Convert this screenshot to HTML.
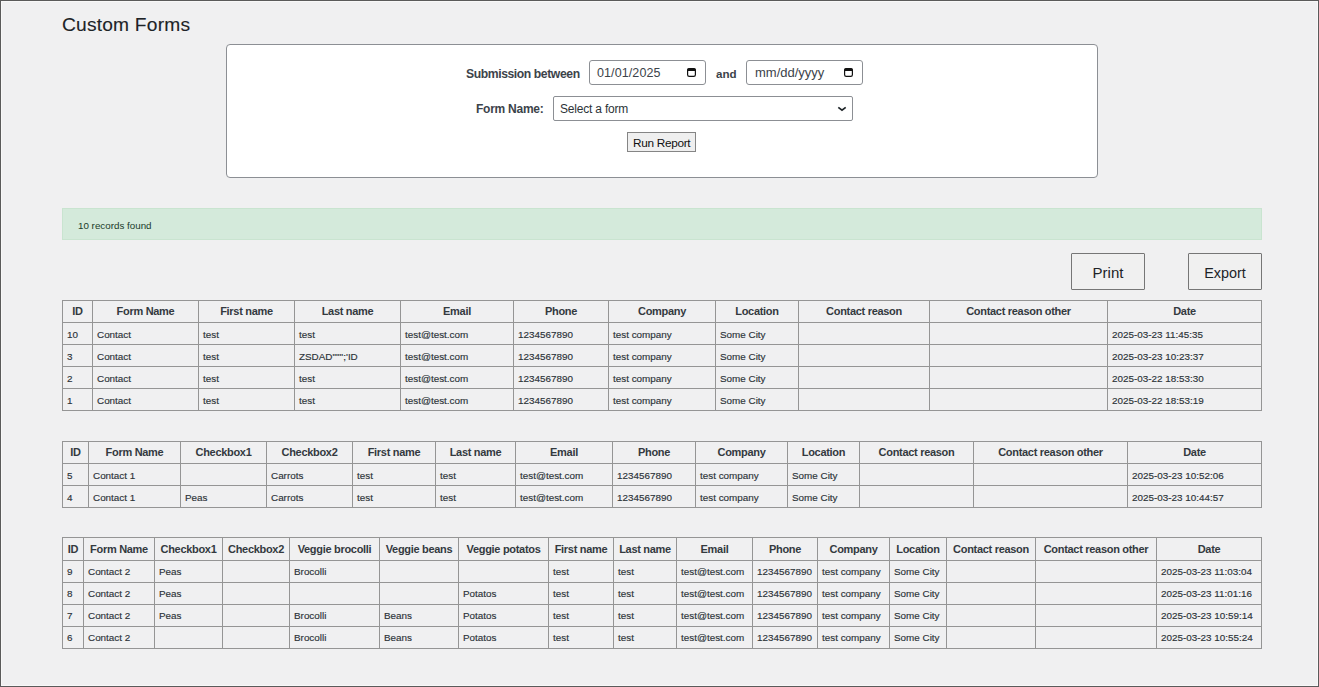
<!DOCTYPE html>
<html><head><meta charset="utf-8"><title>Custom Forms</title>
<style>
html,body{margin:0;padding:0;}
body{width:1319px;height:687px;overflow:hidden;background:#f0f0f1;position:relative;font-family:"Liberation Sans", sans-serif;}
.t{position:absolute;white-space:nowrap;line-height:1;}
.r{position:absolute;}
</style></head><body>
<div class="r" style="left:0px;top:0px;width:1319px;height:1px;background:#5a5a5a"></div>
<div class="r" style="left:0px;top:686px;width:1319px;height:1px;background:#5a5a5a"></div>
<div class="r" style="left:0px;top:0px;width:1px;height:687px;background:#5a5a5a"></div>
<div class="r" style="left:1318px;top:0px;width:1px;height:687px;background:#5a5a5a"></div>
<div class="r" style="left:1px;top:1px;width:1317px;height:1px;background:#f8f8f8"></div>
<div class="r" style="left:1px;top:685px;width:1317px;height:1px;background:#f8f8f8"></div>
<div class="r" style="left:1px;top:1px;width:1px;height:685px;background:#f8f8f8"></div>
<div class="r" style="left:1317px;top:1px;width:1px;height:685px;background:#f8f8f8"></div>
<div class="t" style="left:62px;top:14.85px;font-size:19.2px;color:#1d2327;letter-spacing:0.2px;-webkit-text-stroke:0.12px #1d2327;">Custom Forms</div>
<div class="r" style="left:226px;top:44px;width:872px;height:134px;background:#fff;border:1px solid #8c8f94;border-radius:4px;box-sizing:border-box"></div>
<div class="t" style="left:466px;top:67.67px;font-size:12.2px;font-weight:700;color:#3c434a;letter-spacing:-0.42px;">Submission between</div>
<div class="r" style="left:589px;top:60px;width:117px;height:25px;background:#fff;border:1px solid #8c8f94;border-radius:3px;box-sizing:border-box"></div>
<div class="t" style="left:597px;top:67.42px;font-size:12.5px;color:#3c434a;letter-spacing:0.1px;">01/01/2025</div>
<div class="t" style="left:716px;top:68.18px;font-size:11.6px;font-weight:700;color:#3c434a;">and</div>
<div class="r" style="left:746px;top:60px;width:117px;height:25px;background:#fff;border:1px solid #8c8f94;border-radius:3px;box-sizing:border-box"></div>
<div class="t" style="left:755px;top:66.00px;font-size:13px;color:#3c434a;">mm/dd/yyyy</div>
<div class="t" style="left:476px;top:102.84px;font-size:12px;font-weight:700;color:#3c434a;letter-spacing:-0.25px;">Form Name:</div>
<div class="r" style="left:553px;top:96px;width:300px;height:25px;background:#fff;border:1px solid #8c8f94;border-radius:2px;box-sizing:border-box"></div>
<div class="t" style="left:560px;top:102.84px;font-size:12px;color:#2c3338;letter-spacing:-0.2px;">Select a form</div>
<div class="r" style="left:627px;top:132px;width:69px;height:20px;background:#efefef;border:1px solid #858585;box-sizing:border-box"></div>
<div class="t" style="left:633px;top:137.71px;font-size:11.8px;color:#111;letter-spacing:-0.3px;">Run Report</div>
<svg class="r" style="left:687px;top:68px" width="9" height="9" viewBox="0 0 9 9"><rect x="0.6" y="0.6" width="7.8" height="7.8" rx="1.6" fill="none" stroke="#111" stroke-width="1.2"/><path d="M0.2 2.9 L0.2 1.8 Q0.2 0.2 1.8 0.2 L7.2 0.2 Q8.8 0.2 8.8 1.8 L8.8 2.9 Z" fill="#111"/></svg>
<svg class="r" style="left:844px;top:68px" width="9" height="9" viewBox="0 0 9 9"><rect x="0.6" y="0.6" width="7.8" height="7.8" rx="1.6" fill="none" stroke="#111" stroke-width="1.2"/><path d="M0.2 2.9 L0.2 1.8 Q0.2 0.2 1.8 0.2 L7.2 0.2 Q8.8 0.2 8.8 1.8 L8.8 2.9 Z" fill="#111"/></svg>
<svg class="r" style="left:837px;top:105px" width="10" height="7" viewBox="0 0 10 7"><path d="M1.3 2.4 L5 5.2 L8.7 2.4" fill="none" stroke="#1d2327" stroke-width="1.7"/></svg>
<div class="r" style="left:62px;top:208px;width:1200px;height:32px;background:#d4eadb;border:1px solid #c9e4d0;box-sizing:border-box"></div>
<div class="t" style="left:78px;top:220.70px;font-size:9.8px;color:#203c2a;">10 records found</div>
<div class="r" style="left:1071px;top:253px;width:74px;height:37px;background:#f0f0f0;border:1px solid #767676;box-sizing:border-box;border-radius:1px"></div>
<div class="t" style="left:1071px;top:265.30px;font-size:15px;color:#1d2327;width:74px;text-align:center;">Print</div>
<div class="r" style="left:1188px;top:253px;width:74px;height:37px;background:#f0f0f0;border:1px solid #767676;box-sizing:border-box;border-radius:1px"></div>
<div class="t" style="left:1188px;top:265.81px;font-size:14.4px;color:#1d2327;width:74px;text-align:center;">Export</div>
<div class="r" style="left:62px;top:300px;width:1200px;height:1px;background:#959595"></div>
<div class="r" style="left:62px;top:322px;width:1200px;height:1px;background:#959595"></div>
<div class="r" style="left:62px;top:344px;width:1200px;height:1px;background:#959595"></div>
<div class="r" style="left:62px;top:366px;width:1200px;height:1px;background:#959595"></div>
<div class="r" style="left:62px;top:388px;width:1200px;height:1px;background:#959595"></div>
<div class="r" style="left:62px;top:410px;width:1200px;height:1px;background:#959595"></div>
<div class="r" style="left:62px;top:300px;width:1px;height:111px;background:#959595"></div>
<div class="r" style="left:92px;top:300px;width:1px;height:111px;background:#959595"></div>
<div class="r" style="left:198px;top:300px;width:1px;height:111px;background:#959595"></div>
<div class="r" style="left:294px;top:300px;width:1px;height:111px;background:#959595"></div>
<div class="r" style="left:400px;top:300px;width:1px;height:111px;background:#959595"></div>
<div class="r" style="left:513px;top:300px;width:1px;height:111px;background:#959595"></div>
<div class="r" style="left:608px;top:300px;width:1px;height:111px;background:#959595"></div>
<div class="r" style="left:715px;top:300px;width:1px;height:111px;background:#959595"></div>
<div class="r" style="left:798px;top:300px;width:1px;height:111px;background:#959595"></div>
<div class="r" style="left:929px;top:300px;width:1px;height:111px;background:#959595"></div>
<div class="r" style="left:1107px;top:300px;width:1px;height:111px;background:#959595"></div>
<div class="r" style="left:1261px;top:300px;width:1px;height:111px;background:#959595"></div>
<div class="t" style="left:63px;top:305.69px;font-size:11px;font-weight:700;color:#343a3f;letter-spacing:-0.3px;width:29px;text-align:center;">ID</div>
<div class="t" style="left:93px;top:305.69px;font-size:11px;font-weight:700;color:#343a3f;letter-spacing:-0.3px;width:105px;text-align:center;">Form Name</div>
<div class="t" style="left:199px;top:305.69px;font-size:11px;font-weight:700;color:#343a3f;letter-spacing:-0.3px;width:95px;text-align:center;">First name</div>
<div class="t" style="left:295px;top:305.69px;font-size:11px;font-weight:700;color:#343a3f;letter-spacing:-0.3px;width:105px;text-align:center;">Last name</div>
<div class="t" style="left:401px;top:305.69px;font-size:11px;font-weight:700;color:#343a3f;letter-spacing:-0.3px;width:112px;text-align:center;">Email</div>
<div class="t" style="left:514px;top:305.69px;font-size:11px;font-weight:700;color:#343a3f;letter-spacing:-0.3px;width:94px;text-align:center;">Phone</div>
<div class="t" style="left:609px;top:305.69px;font-size:11px;font-weight:700;color:#343a3f;letter-spacing:-0.3px;width:106px;text-align:center;">Company</div>
<div class="t" style="left:716px;top:305.69px;font-size:11px;font-weight:700;color:#343a3f;letter-spacing:-0.3px;width:82px;text-align:center;">Location</div>
<div class="t" style="left:799px;top:305.69px;font-size:11px;font-weight:700;color:#343a3f;letter-spacing:-0.3px;width:130px;text-align:center;">Contact reason</div>
<div class="t" style="left:930px;top:305.69px;font-size:11px;font-weight:700;color:#343a3f;letter-spacing:-0.3px;width:177px;text-align:center;">Contact reason other</div>
<div class="t" style="left:1108px;top:305.69px;font-size:11px;font-weight:700;color:#343a3f;letter-spacing:-0.3px;width:153px;text-align:center;">Date</div>
<div class="t" style="left:67px;top:329.62px;font-size:9.9px;color:#2c3338;-webkit-text-stroke:0.15px #2c3338;">10</div>
<div class="t" style="left:97px;top:329.62px;font-size:9.9px;color:#2c3338;-webkit-text-stroke:0.15px #2c3338;">Contact</div>
<div class="t" style="left:203px;top:329.62px;font-size:9.9px;color:#2c3338;-webkit-text-stroke:0.15px #2c3338;">test</div>
<div class="t" style="left:299px;top:329.62px;font-size:9.9px;color:#2c3338;-webkit-text-stroke:0.15px #2c3338;">test</div>
<div class="t" style="left:405px;top:329.62px;font-size:9.9px;color:#2c3338;-webkit-text-stroke:0.15px #2c3338;">test@test.com</div>
<div class="t" style="left:518px;top:329.62px;font-size:9.9px;color:#2c3338;-webkit-text-stroke:0.15px #2c3338;">1234567890</div>
<div class="t" style="left:613px;top:329.62px;font-size:9.9px;color:#2c3338;-webkit-text-stroke:0.15px #2c3338;">test company</div>
<div class="t" style="left:720px;top:329.62px;font-size:9.9px;color:#2c3338;-webkit-text-stroke:0.15px #2c3338;">Some City</div>
<div class="t" style="left:1112px;top:329.62px;font-size:9.9px;color:#2c3338;-webkit-text-stroke:0.15px #2c3338;">2025-03-23 11:45:35</div>
<div class="t" style="left:67px;top:351.62px;font-size:9.9px;color:#2c3338;-webkit-text-stroke:0.15px #2c3338;">3</div>
<div class="t" style="left:97px;top:351.62px;font-size:9.9px;color:#2c3338;-webkit-text-stroke:0.15px #2c3338;">Contact</div>
<div class="t" style="left:203px;top:351.62px;font-size:9.9px;color:#2c3338;-webkit-text-stroke:0.15px #2c3338;">test</div>
<div class="t" style="left:299px;top:351.62px;font-size:9.9px;color:#2c3338;-webkit-text-stroke:0.15px #2c3338;">ZSDAD""'';'ID</div>
<div class="t" style="left:405px;top:351.62px;font-size:9.9px;color:#2c3338;-webkit-text-stroke:0.15px #2c3338;">test@test.com</div>
<div class="t" style="left:518px;top:351.62px;font-size:9.9px;color:#2c3338;-webkit-text-stroke:0.15px #2c3338;">1234567890</div>
<div class="t" style="left:613px;top:351.62px;font-size:9.9px;color:#2c3338;-webkit-text-stroke:0.15px #2c3338;">test company</div>
<div class="t" style="left:720px;top:351.62px;font-size:9.9px;color:#2c3338;-webkit-text-stroke:0.15px #2c3338;">Some City</div>
<div class="t" style="left:1112px;top:351.62px;font-size:9.9px;color:#2c3338;-webkit-text-stroke:0.15px #2c3338;">2025-03-23 10:23:37</div>
<div class="t" style="left:67px;top:373.62px;font-size:9.9px;color:#2c3338;-webkit-text-stroke:0.15px #2c3338;">2</div>
<div class="t" style="left:97px;top:373.62px;font-size:9.9px;color:#2c3338;-webkit-text-stroke:0.15px #2c3338;">Contact</div>
<div class="t" style="left:203px;top:373.62px;font-size:9.9px;color:#2c3338;-webkit-text-stroke:0.15px #2c3338;">test</div>
<div class="t" style="left:299px;top:373.62px;font-size:9.9px;color:#2c3338;-webkit-text-stroke:0.15px #2c3338;">test</div>
<div class="t" style="left:405px;top:373.62px;font-size:9.9px;color:#2c3338;-webkit-text-stroke:0.15px #2c3338;">test@test.com</div>
<div class="t" style="left:518px;top:373.62px;font-size:9.9px;color:#2c3338;-webkit-text-stroke:0.15px #2c3338;">1234567890</div>
<div class="t" style="left:613px;top:373.62px;font-size:9.9px;color:#2c3338;-webkit-text-stroke:0.15px #2c3338;">test company</div>
<div class="t" style="left:720px;top:373.62px;font-size:9.9px;color:#2c3338;-webkit-text-stroke:0.15px #2c3338;">Some City</div>
<div class="t" style="left:1112px;top:373.62px;font-size:9.9px;color:#2c3338;-webkit-text-stroke:0.15px #2c3338;">2025-03-22 18:53:30</div>
<div class="t" style="left:67px;top:395.62px;font-size:9.9px;color:#2c3338;-webkit-text-stroke:0.15px #2c3338;">1</div>
<div class="t" style="left:97px;top:395.62px;font-size:9.9px;color:#2c3338;-webkit-text-stroke:0.15px #2c3338;">Contact</div>
<div class="t" style="left:203px;top:395.62px;font-size:9.9px;color:#2c3338;-webkit-text-stroke:0.15px #2c3338;">test</div>
<div class="t" style="left:299px;top:395.62px;font-size:9.9px;color:#2c3338;-webkit-text-stroke:0.15px #2c3338;">test</div>
<div class="t" style="left:405px;top:395.62px;font-size:9.9px;color:#2c3338;-webkit-text-stroke:0.15px #2c3338;">test@test.com</div>
<div class="t" style="left:518px;top:395.62px;font-size:9.9px;color:#2c3338;-webkit-text-stroke:0.15px #2c3338;">1234567890</div>
<div class="t" style="left:613px;top:395.62px;font-size:9.9px;color:#2c3338;-webkit-text-stroke:0.15px #2c3338;">test company</div>
<div class="t" style="left:720px;top:395.62px;font-size:9.9px;color:#2c3338;-webkit-text-stroke:0.15px #2c3338;">Some City</div>
<div class="t" style="left:1112px;top:395.62px;font-size:9.9px;color:#2c3338;-webkit-text-stroke:0.15px #2c3338;">2025-03-22 18:53:19</div>
<div class="r" style="left:62px;top:441px;width:1200px;height:1px;background:#959595"></div>
<div class="r" style="left:62px;top:463px;width:1200px;height:1px;background:#959595"></div>
<div class="r" style="left:62px;top:485px;width:1200px;height:1px;background:#959595"></div>
<div class="r" style="left:62px;top:507px;width:1200px;height:1px;background:#959595"></div>
<div class="r" style="left:62px;top:441px;width:1px;height:67px;background:#959595"></div>
<div class="r" style="left:88px;top:441px;width:1px;height:67px;background:#959595"></div>
<div class="r" style="left:180px;top:441px;width:1px;height:67px;background:#959595"></div>
<div class="r" style="left:266px;top:441px;width:1px;height:67px;background:#959595"></div>
<div class="r" style="left:352px;top:441px;width:1px;height:67px;background:#959595"></div>
<div class="r" style="left:435px;top:441px;width:1px;height:67px;background:#959595"></div>
<div class="r" style="left:515px;top:441px;width:1px;height:67px;background:#959595"></div>
<div class="r" style="left:612px;top:441px;width:1px;height:67px;background:#959595"></div>
<div class="r" style="left:695px;top:441px;width:1px;height:67px;background:#959595"></div>
<div class="r" style="left:787px;top:441px;width:1px;height:67px;background:#959595"></div>
<div class="r" style="left:859px;top:441px;width:1px;height:67px;background:#959595"></div>
<div class="r" style="left:973px;top:441px;width:1px;height:67px;background:#959595"></div>
<div class="r" style="left:1127px;top:441px;width:1px;height:67px;background:#959595"></div>
<div class="r" style="left:1261px;top:441px;width:1px;height:67px;background:#959595"></div>
<div class="t" style="left:63px;top:446.69px;font-size:11px;font-weight:700;color:#343a3f;letter-spacing:-0.3px;width:25px;text-align:center;">ID</div>
<div class="t" style="left:89px;top:446.69px;font-size:11px;font-weight:700;color:#343a3f;letter-spacing:-0.3px;width:91px;text-align:center;">Form Name</div>
<div class="t" style="left:181px;top:446.69px;font-size:11px;font-weight:700;color:#343a3f;letter-spacing:-0.3px;width:85px;text-align:center;">Checkbox1</div>
<div class="t" style="left:267px;top:446.69px;font-size:11px;font-weight:700;color:#343a3f;letter-spacing:-0.3px;width:85px;text-align:center;">Checkbox2</div>
<div class="t" style="left:353px;top:446.69px;font-size:11px;font-weight:700;color:#343a3f;letter-spacing:-0.3px;width:82px;text-align:center;">First name</div>
<div class="t" style="left:436px;top:446.69px;font-size:11px;font-weight:700;color:#343a3f;letter-spacing:-0.3px;width:79px;text-align:center;">Last name</div>
<div class="t" style="left:516px;top:446.69px;font-size:11px;font-weight:700;color:#343a3f;letter-spacing:-0.3px;width:96px;text-align:center;">Email</div>
<div class="t" style="left:613px;top:446.69px;font-size:11px;font-weight:700;color:#343a3f;letter-spacing:-0.3px;width:82px;text-align:center;">Phone</div>
<div class="t" style="left:696px;top:446.69px;font-size:11px;font-weight:700;color:#343a3f;letter-spacing:-0.3px;width:91px;text-align:center;">Company</div>
<div class="t" style="left:788px;top:446.69px;font-size:11px;font-weight:700;color:#343a3f;letter-spacing:-0.3px;width:71px;text-align:center;">Location</div>
<div class="t" style="left:860px;top:446.69px;font-size:11px;font-weight:700;color:#343a3f;letter-spacing:-0.3px;width:113px;text-align:center;">Contact reason</div>
<div class="t" style="left:974px;top:446.69px;font-size:11px;font-weight:700;color:#343a3f;letter-spacing:-0.3px;width:153px;text-align:center;">Contact reason other</div>
<div class="t" style="left:1128px;top:446.69px;font-size:11px;font-weight:700;color:#343a3f;letter-spacing:-0.3px;width:133px;text-align:center;">Date</div>
<div class="t" style="left:67px;top:470.62px;font-size:9.9px;color:#2c3338;-webkit-text-stroke:0.15px #2c3338;">5</div>
<div class="t" style="left:93px;top:470.62px;font-size:9.9px;color:#2c3338;-webkit-text-stroke:0.15px #2c3338;">Contact 1</div>
<div class="t" style="left:271px;top:470.62px;font-size:9.9px;color:#2c3338;-webkit-text-stroke:0.15px #2c3338;">Carrots</div>
<div class="t" style="left:357px;top:470.62px;font-size:9.9px;color:#2c3338;-webkit-text-stroke:0.15px #2c3338;">test</div>
<div class="t" style="left:440px;top:470.62px;font-size:9.9px;color:#2c3338;-webkit-text-stroke:0.15px #2c3338;">test</div>
<div class="t" style="left:520px;top:470.62px;font-size:9.9px;color:#2c3338;-webkit-text-stroke:0.15px #2c3338;">test@test.com</div>
<div class="t" style="left:617px;top:470.62px;font-size:9.9px;color:#2c3338;-webkit-text-stroke:0.15px #2c3338;">1234567890</div>
<div class="t" style="left:700px;top:470.62px;font-size:9.9px;color:#2c3338;-webkit-text-stroke:0.15px #2c3338;">test company</div>
<div class="t" style="left:792px;top:470.62px;font-size:9.9px;color:#2c3338;-webkit-text-stroke:0.15px #2c3338;">Some City</div>
<div class="t" style="left:1132px;top:470.62px;font-size:9.9px;color:#2c3338;-webkit-text-stroke:0.15px #2c3338;">2025-03-23 10:52:06</div>
<div class="t" style="left:67px;top:492.62px;font-size:9.9px;color:#2c3338;-webkit-text-stroke:0.15px #2c3338;">4</div>
<div class="t" style="left:93px;top:492.62px;font-size:9.9px;color:#2c3338;-webkit-text-stroke:0.15px #2c3338;">Contact 1</div>
<div class="t" style="left:185px;top:492.62px;font-size:9.9px;color:#2c3338;-webkit-text-stroke:0.15px #2c3338;">Peas</div>
<div class="t" style="left:271px;top:492.62px;font-size:9.9px;color:#2c3338;-webkit-text-stroke:0.15px #2c3338;">Carrots</div>
<div class="t" style="left:357px;top:492.62px;font-size:9.9px;color:#2c3338;-webkit-text-stroke:0.15px #2c3338;">test</div>
<div class="t" style="left:440px;top:492.62px;font-size:9.9px;color:#2c3338;-webkit-text-stroke:0.15px #2c3338;">test</div>
<div class="t" style="left:520px;top:492.62px;font-size:9.9px;color:#2c3338;-webkit-text-stroke:0.15px #2c3338;">test@test.com</div>
<div class="t" style="left:617px;top:492.62px;font-size:9.9px;color:#2c3338;-webkit-text-stroke:0.15px #2c3338;">1234567890</div>
<div class="t" style="left:700px;top:492.62px;font-size:9.9px;color:#2c3338;-webkit-text-stroke:0.15px #2c3338;">test company</div>
<div class="t" style="left:792px;top:492.62px;font-size:9.9px;color:#2c3338;-webkit-text-stroke:0.15px #2c3338;">Some City</div>
<div class="t" style="left:1132px;top:492.62px;font-size:9.9px;color:#2c3338;-webkit-text-stroke:0.15px #2c3338;">2025-03-23 10:44:57</div>
<div class="r" style="left:62px;top:537px;width:1200px;height:1px;background:#959595"></div>
<div class="r" style="left:62px;top:560px;width:1200px;height:1px;background:#959595"></div>
<div class="r" style="left:62px;top:582px;width:1200px;height:1px;background:#959595"></div>
<div class="r" style="left:62px;top:604px;width:1200px;height:1px;background:#959595"></div>
<div class="r" style="left:62px;top:626px;width:1200px;height:1px;background:#959595"></div>
<div class="r" style="left:62px;top:648px;width:1200px;height:1px;background:#959595"></div>
<div class="r" style="left:62px;top:537px;width:1px;height:112px;background:#959595"></div>
<div class="r" style="left:83px;top:537px;width:1px;height:112px;background:#959595"></div>
<div class="r" style="left:154px;top:537px;width:1px;height:112px;background:#959595"></div>
<div class="r" style="left:222px;top:537px;width:1px;height:112px;background:#959595"></div>
<div class="r" style="left:289px;top:537px;width:1px;height:112px;background:#959595"></div>
<div class="r" style="left:379px;top:537px;width:1px;height:112px;background:#959595"></div>
<div class="r" style="left:458px;top:537px;width:1px;height:112px;background:#959595"></div>
<div class="r" style="left:548px;top:537px;width:1px;height:112px;background:#959595"></div>
<div class="r" style="left:613px;top:537px;width:1px;height:112px;background:#959595"></div>
<div class="r" style="left:676px;top:537px;width:1px;height:112px;background:#959595"></div>
<div class="r" style="left:752px;top:537px;width:1px;height:112px;background:#959595"></div>
<div class="r" style="left:817px;top:537px;width:1px;height:112px;background:#959595"></div>
<div class="r" style="left:889px;top:537px;width:1px;height:112px;background:#959595"></div>
<div class="r" style="left:946px;top:537px;width:1px;height:112px;background:#959595"></div>
<div class="r" style="left:1035px;top:537px;width:1px;height:112px;background:#959595"></div>
<div class="r" style="left:1156px;top:537px;width:1px;height:112px;background:#959595"></div>
<div class="r" style="left:1261px;top:537px;width:1px;height:112px;background:#959595"></div>
<div class="t" style="left:63px;top:543.69px;font-size:11px;font-weight:700;color:#343a3f;letter-spacing:-0.3px;width:20px;text-align:center;">ID</div>
<div class="t" style="left:84px;top:543.69px;font-size:11px;font-weight:700;color:#343a3f;letter-spacing:-0.3px;width:70px;text-align:center;">Form Name</div>
<div class="t" style="left:155px;top:543.69px;font-size:11px;font-weight:700;color:#343a3f;letter-spacing:-0.3px;width:67px;text-align:center;">Checkbox1</div>
<div class="t" style="left:223px;top:543.69px;font-size:11px;font-weight:700;color:#343a3f;letter-spacing:-0.3px;width:66px;text-align:center;">Checkbox2</div>
<div class="t" style="left:290px;top:543.69px;font-size:11px;font-weight:700;color:#343a3f;letter-spacing:-0.3px;width:89px;text-align:center;">Veggie brocolli</div>
<div class="t" style="left:380px;top:543.69px;font-size:11px;font-weight:700;color:#343a3f;letter-spacing:-0.3px;width:78px;text-align:center;">Veggie beans</div>
<div class="t" style="left:459px;top:543.69px;font-size:11px;font-weight:700;color:#343a3f;letter-spacing:-0.3px;width:89px;text-align:center;">Veggie potatos</div>
<div class="t" style="left:549px;top:543.69px;font-size:11px;font-weight:700;color:#343a3f;letter-spacing:-0.3px;width:64px;text-align:center;">First name</div>
<div class="t" style="left:614px;top:543.69px;font-size:11px;font-weight:700;color:#343a3f;letter-spacing:-0.3px;width:62px;text-align:center;">Last name</div>
<div class="t" style="left:677px;top:543.69px;font-size:11px;font-weight:700;color:#343a3f;letter-spacing:-0.3px;width:75px;text-align:center;">Email</div>
<div class="t" style="left:753px;top:543.69px;font-size:11px;font-weight:700;color:#343a3f;letter-spacing:-0.3px;width:64px;text-align:center;">Phone</div>
<div class="t" style="left:818px;top:543.69px;font-size:11px;font-weight:700;color:#343a3f;letter-spacing:-0.3px;width:71px;text-align:center;">Company</div>
<div class="t" style="left:890px;top:543.69px;font-size:11px;font-weight:700;color:#343a3f;letter-spacing:-0.3px;width:56px;text-align:center;">Location</div>
<div class="t" style="left:947px;top:543.69px;font-size:11px;font-weight:700;color:#343a3f;letter-spacing:-0.3px;width:88px;text-align:center;">Contact reason</div>
<div class="t" style="left:1036px;top:543.69px;font-size:11px;font-weight:700;color:#343a3f;letter-spacing:-0.3px;width:120px;text-align:center;">Contact reason other</div>
<div class="t" style="left:1157px;top:543.69px;font-size:11px;font-weight:700;color:#343a3f;letter-spacing:-0.3px;width:104px;text-align:center;">Date</div>
<div class="t" style="left:67px;top:566.62px;font-size:9.9px;color:#2c3338;-webkit-text-stroke:0.15px #2c3338;">9</div>
<div class="t" style="left:88px;top:566.62px;font-size:9.9px;color:#2c3338;-webkit-text-stroke:0.15px #2c3338;">Contact 2</div>
<div class="t" style="left:159px;top:566.62px;font-size:9.9px;color:#2c3338;-webkit-text-stroke:0.15px #2c3338;">Peas</div>
<div class="t" style="left:294px;top:566.62px;font-size:9.9px;color:#2c3338;-webkit-text-stroke:0.15px #2c3338;">Brocolli</div>
<div class="t" style="left:553px;top:566.62px;font-size:9.9px;color:#2c3338;-webkit-text-stroke:0.15px #2c3338;">test</div>
<div class="t" style="left:618px;top:566.62px;font-size:9.9px;color:#2c3338;-webkit-text-stroke:0.15px #2c3338;">test</div>
<div class="t" style="left:681px;top:566.62px;font-size:9.9px;color:#2c3338;-webkit-text-stroke:0.15px #2c3338;">test@test.com</div>
<div class="t" style="left:757px;top:566.62px;font-size:9.9px;color:#2c3338;-webkit-text-stroke:0.15px #2c3338;">1234567890</div>
<div class="t" style="left:822px;top:566.62px;font-size:9.9px;color:#2c3338;-webkit-text-stroke:0.15px #2c3338;">test company</div>
<div class="t" style="left:894px;top:566.62px;font-size:9.9px;color:#2c3338;-webkit-text-stroke:0.15px #2c3338;">Some City</div>
<div class="t" style="left:1161px;top:566.62px;font-size:9.9px;color:#2c3338;-webkit-text-stroke:0.15px #2c3338;">2025-03-23 11:03:04</div>
<div class="t" style="left:67px;top:588.62px;font-size:9.9px;color:#2c3338;-webkit-text-stroke:0.15px #2c3338;">8</div>
<div class="t" style="left:88px;top:588.62px;font-size:9.9px;color:#2c3338;-webkit-text-stroke:0.15px #2c3338;">Contact 2</div>
<div class="t" style="left:159px;top:588.62px;font-size:9.9px;color:#2c3338;-webkit-text-stroke:0.15px #2c3338;">Peas</div>
<div class="t" style="left:463px;top:588.62px;font-size:9.9px;color:#2c3338;-webkit-text-stroke:0.15px #2c3338;">Potatos</div>
<div class="t" style="left:553px;top:588.62px;font-size:9.9px;color:#2c3338;-webkit-text-stroke:0.15px #2c3338;">test</div>
<div class="t" style="left:618px;top:588.62px;font-size:9.9px;color:#2c3338;-webkit-text-stroke:0.15px #2c3338;">test</div>
<div class="t" style="left:681px;top:588.62px;font-size:9.9px;color:#2c3338;-webkit-text-stroke:0.15px #2c3338;">test@test.com</div>
<div class="t" style="left:757px;top:588.62px;font-size:9.9px;color:#2c3338;-webkit-text-stroke:0.15px #2c3338;">1234567890</div>
<div class="t" style="left:822px;top:588.62px;font-size:9.9px;color:#2c3338;-webkit-text-stroke:0.15px #2c3338;">test company</div>
<div class="t" style="left:894px;top:588.62px;font-size:9.9px;color:#2c3338;-webkit-text-stroke:0.15px #2c3338;">Some City</div>
<div class="t" style="left:1161px;top:588.62px;font-size:9.9px;color:#2c3338;-webkit-text-stroke:0.15px #2c3338;">2025-03-23 11:01:16</div>
<div class="t" style="left:67px;top:610.62px;font-size:9.9px;color:#2c3338;-webkit-text-stroke:0.15px #2c3338;">7</div>
<div class="t" style="left:88px;top:610.62px;font-size:9.9px;color:#2c3338;-webkit-text-stroke:0.15px #2c3338;">Contact 2</div>
<div class="t" style="left:159px;top:610.62px;font-size:9.9px;color:#2c3338;-webkit-text-stroke:0.15px #2c3338;">Peas</div>
<div class="t" style="left:294px;top:610.62px;font-size:9.9px;color:#2c3338;-webkit-text-stroke:0.15px #2c3338;">Brocolli</div>
<div class="t" style="left:384px;top:610.62px;font-size:9.9px;color:#2c3338;-webkit-text-stroke:0.15px #2c3338;">Beans</div>
<div class="t" style="left:463px;top:610.62px;font-size:9.9px;color:#2c3338;-webkit-text-stroke:0.15px #2c3338;">Potatos</div>
<div class="t" style="left:553px;top:610.62px;font-size:9.9px;color:#2c3338;-webkit-text-stroke:0.15px #2c3338;">test</div>
<div class="t" style="left:618px;top:610.62px;font-size:9.9px;color:#2c3338;-webkit-text-stroke:0.15px #2c3338;">test</div>
<div class="t" style="left:681px;top:610.62px;font-size:9.9px;color:#2c3338;-webkit-text-stroke:0.15px #2c3338;">test@test.com</div>
<div class="t" style="left:757px;top:610.62px;font-size:9.9px;color:#2c3338;-webkit-text-stroke:0.15px #2c3338;">1234567890</div>
<div class="t" style="left:822px;top:610.62px;font-size:9.9px;color:#2c3338;-webkit-text-stroke:0.15px #2c3338;">test company</div>
<div class="t" style="left:894px;top:610.62px;font-size:9.9px;color:#2c3338;-webkit-text-stroke:0.15px #2c3338;">Some City</div>
<div class="t" style="left:1161px;top:610.62px;font-size:9.9px;color:#2c3338;-webkit-text-stroke:0.15px #2c3338;">2025-03-23 10:59:14</div>
<div class="t" style="left:67px;top:632.62px;font-size:9.9px;color:#2c3338;-webkit-text-stroke:0.15px #2c3338;">6</div>
<div class="t" style="left:88px;top:632.62px;font-size:9.9px;color:#2c3338;-webkit-text-stroke:0.15px #2c3338;">Contact 2</div>
<div class="t" style="left:294px;top:632.62px;font-size:9.9px;color:#2c3338;-webkit-text-stroke:0.15px #2c3338;">Brocolli</div>
<div class="t" style="left:384px;top:632.62px;font-size:9.9px;color:#2c3338;-webkit-text-stroke:0.15px #2c3338;">Beans</div>
<div class="t" style="left:463px;top:632.62px;font-size:9.9px;color:#2c3338;-webkit-text-stroke:0.15px #2c3338;">Potatos</div>
<div class="t" style="left:553px;top:632.62px;font-size:9.9px;color:#2c3338;-webkit-text-stroke:0.15px #2c3338;">test</div>
<div class="t" style="left:618px;top:632.62px;font-size:9.9px;color:#2c3338;-webkit-text-stroke:0.15px #2c3338;">test</div>
<div class="t" style="left:681px;top:632.62px;font-size:9.9px;color:#2c3338;-webkit-text-stroke:0.15px #2c3338;">test@test.com</div>
<div class="t" style="left:757px;top:632.62px;font-size:9.9px;color:#2c3338;-webkit-text-stroke:0.15px #2c3338;">1234567890</div>
<div class="t" style="left:822px;top:632.62px;font-size:9.9px;color:#2c3338;-webkit-text-stroke:0.15px #2c3338;">test company</div>
<div class="t" style="left:894px;top:632.62px;font-size:9.9px;color:#2c3338;-webkit-text-stroke:0.15px #2c3338;">Some City</div>
<div class="t" style="left:1161px;top:632.62px;font-size:9.9px;color:#2c3338;-webkit-text-stroke:0.15px #2c3338;">2025-03-23 10:55:24</div>
</body></html>
